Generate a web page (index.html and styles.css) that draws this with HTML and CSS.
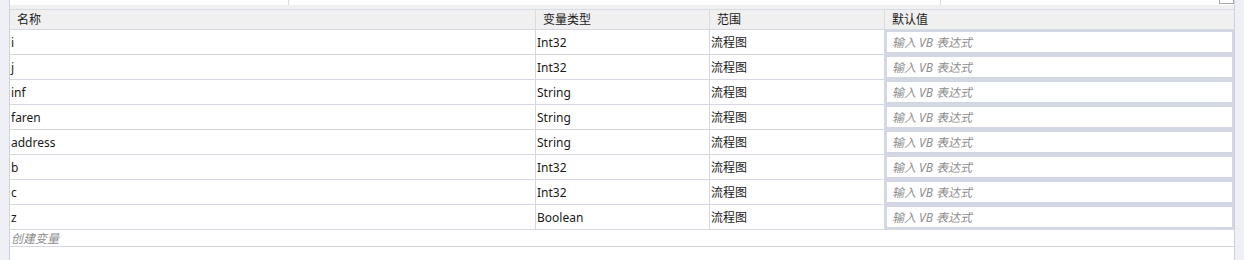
FILE: index.html
```html
<!DOCTYPE html>
<html lang="zh-CN">
<head>
    <meta charset="UTF-8">
    <title>变量</title>
    <link rel="stylesheet" href="styles.css">
</head>
<body>
    <div class="frame">
        <div class="side left"></div>
        <div class="main">
            <div class="topbar">
                <div class="seg first"></div>
                <div class="seg second"></div>
                <div class="seg third"><span class="box"></span></div>
            </div>
            <div class="gap"></div>

            <div class="vars">
                <div class="row head">
                    <div class="cell">名称</div>
                    <div class="cell">变量类型</div>
                    <div class="cell">范围</div>
                    <div class="cell">默认值</div>
                </div>
                <div class="row">
                    <div class="cell">i</div>
                    <div class="cell">Int32</div>
                    <div class="cell">流程图</div>
                    <div class="cell def"><div class="input">输入 VB 表达式</div></div>
                </div>
                <div class="row">
                    <div class="cell">j</div>
                    <div class="cell">Int32</div>
                    <div class="cell">流程图</div>
                    <div class="cell def"><div class="input">输入 VB 表达式</div></div>
                </div>
                <div class="row">
                    <div class="cell">inf</div>
                    <div class="cell">String</div>
                    <div class="cell">流程图</div>
                    <div class="cell def"><div class="input">输入 VB 表达式</div></div>
                </div>
                <div class="row">
                    <div class="cell">faren</div>
                    <div class="cell">String</div>
                    <div class="cell">流程图</div>
                    <div class="cell def"><div class="input">输入 VB 表达式</div></div>
                </div>
                <div class="row">
                    <div class="cell">address</div>
                    <div class="cell">String</div>
                    <div class="cell">流程图</div>
                    <div class="cell def"><div class="input">输入 VB 表达式</div></div>
                </div>
                <div class="row">
                    <div class="cell">b</div>
                    <div class="cell">Int32</div>
                    <div class="cell">流程图</div>
                    <div class="cell def"><div class="input">输入 VB 表达式</div></div>
                </div>
                <div class="row">
                    <div class="cell">c</div>
                    <div class="cell">Int32</div>
                    <div class="cell">流程图</div>
                    <div class="cell def"><div class="input">输入 VB 表达式</div></div>
                </div>
                <div class="row">
                    <div class="cell">z</div>
                    <div class="cell">Boolean</div>
                    <div class="cell">流程图</div>
                    <div class="cell def"><div class="input">输入 VB 表达式</div></div>
                </div>
            </div>

            <div class="create">创建变量</div>
        </div>
        <div class="side right"></div>
    </div>
</body>
</html>
```

FILE: styles.css
```css
body {
    margin: 0;
    font-family: "Noto Sans", "Noto Sans CJK SC", sans-serif;
    font-size: 12px;
    color: #1a1a1a;
    background: #fff;
}
.frame {
    display: flex;
    height: 260px;
}
.side {
    background: #eff0f6;
}
.side.left {
    width: 9px;
    border-right: 1px solid #cdd1de;
}
.side.right {
    width: 9px;
    border-left: 1px solid #cdd1de;
}
.main {
    width: 1224px;
    display: flex;
    flex-direction: column;
}
.topbar {
    display: flex;
    height: 5px;
    background: #fff;
}
.seg {
    border-right: 1px solid #d3dae8;
}
.seg.first {
    width: 278px;
}
.seg.second {
    width: 651px;
}
.seg.third {
    flex: 1;
    border-right: none;
    display: flex;
    justify-content: flex-end;
}
.box {
    width: 13px;
    height: 3px;
    border: 1px solid #a8a8a8;
    border-top: none;
}
.gap {
    height: 4px;
    background: #f0f0f0;
    border-bottom: 1px solid #d8dce6;
}
.vars {
    display: flex;
    flex-direction: column;
}
.row {
    display: grid;
    grid-template-columns: 526px 174px 175px 349px;
    height: 24px;
    border-bottom: 1px solid #d5d8e2;
}
.cell {
    padding: 2px 0 0 1px;
    line-height: 22px;
    white-space: nowrap;
    border-right: 1px solid #d5d8e2;
}
.cell:last-child {
    border-right: none;
}
.row.head {
    height: 19px;
    background: #f0f0f0;
}
.row.head .cell {
    padding: 1px 0 0 7px;
    line-height: 18px;
    border-right-color: #dcdcdc;
}
.cell.def {
    padding: 0;
}
.input {
    height: 20px;
    line-height: 21px;
    border: 2px solid #d3d7e3;
    background: #fff;
    padding-left: 5px;
    color: #8e8e8e;
    font-style: italic;
}
.create {
    height: 16px;
    line-height: 18px;
    padding-left: 1px;
    color: #8e8e8e;
    font-style: italic;
    border-bottom: 1px solid #d5d8e2;
}
```
